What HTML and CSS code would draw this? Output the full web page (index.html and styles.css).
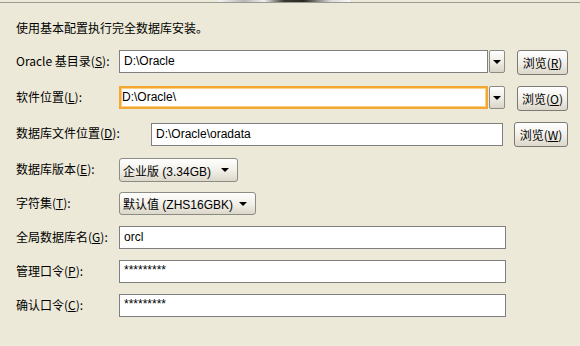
FILE: index.html
```html
<!DOCTYPE html>
<html lang="zh-CN">
<head>
    <meta charset="UTF-8">
    <title>Oracle 安装</title>
    <link rel="stylesheet" href="styles.css">
</head>
<body>

    <!-- top banner edge -->
    <div class="topbar"><div class="banner-edge"></div></div>

    <p class="intro">使用基本配置执行完全数据库安装。</p>

    <div class="form">
        <div class="row tall">
            <label class="label">Oracle 基目录(<u>S</u>):</label>
            <div class="combo">
                <div class="field">D:\Oracle</div>
                <div class="drop"><span class="tri"></span></div>
            </div>
            <button class="browse">浏览(<u>R</u>)</button>
        </div>

        <div class="row tall">
            <label class="label">软件位置(<u>L</u>):</label>
            <div class="combo">
                <div class="field focus">D:\Oracle\</div>
                <div class="drop"><span class="tri"></span></div>
            </div>
            <button class="browse">浏览(<u>O</u>)</button>
        </div>

        <div class="row tall">
            <label class="label wide">数据库文件位置(<u>D</u>):</label>
            <div class="field data">D:\Oracle\oradata</div>
            <button class="browse narrow">浏览(<u>W</u>)</button>
        </div>

        <div class="row">
            <label class="label">数据库版本(<u>E</u>):</label>
            <div class="select edition">企业版 (3.34GB)<span class="tri"></span></div>
        </div>

        <div class="row">
            <label class="label">字符集(<u>T</u>):</label>
            <div class="select charset">默认值 (ZHS16GBK)<span class="tri"></span></div>
        </div>

        <div class="row">
            <label class="label">全局数据库名(<u>G</u>):</label>
            <div class="field plain">orcl</div>
        </div>

        <div class="row">
            <label class="label">管理口令(<u>P</u>):</label>
            <div class="field plain pw">*********</div>
        </div>

        <div class="row">
            <label class="label">确认口令(<u>C</u>):</label>
            <div class="field plain pw">*********</div>
        </div>
    </div>

</body>
</html>
```

FILE: styles.css
```css
body {
    margin: 0;
    background-color: #ece9d8;
    font-family: "Noto Sans CJK SC", "Liberation Sans", sans-serif;
    font-size: 12px;
    color: #000;
    width: 580px;
    height: 346px;
    overflow: hidden;
}

.topbar {
    height: 2px;
    border-bottom: 1px solid #9a9a92;
    display: flex;
    justify-content: center;
}

.banner-edge {
    width: 132px;
    height: 2px;
    margin-left: -12px;
    background: linear-gradient(to right, #f4f4f4, #b8b8b8 20%, #f0f0f0 35%, #3a3a30 50%, #2a2a22 65%, #d8d8d8 85%, #fafafa);
}

.intro {
    margin: 0;
    padding: 17px 0 0 16px;
    line-height: 16px;
    height: 16px;
}

.form {
    margin-top: 14px;
    padding-left: 16px;
}

.row {
    display: flex;
    align-items: flex-start;
    height: 24px;
    margin-bottom: 10px;
}

.row.tall {
    height: 25px;
    margin-bottom: 11px;
}

.label {
    width: 103px;
    flex: none;
    line-height: 22px;
    white-space: nowrap;
}

.label.wide {
    width: 135px;
}

u {
    text-decoration: underline;
    text-underline-offset: 1px;
}

.combo {
    display: flex;
    width: 386px;
    height: 23px;
}

.field {
    box-sizing: border-box;
    height: 23px;
    border: 1px solid #7f7f7f;
    background: #fff;
    padding-left: 4px;
    line-height: 21px;
    font-family: "Liberation Sans", sans-serif;
    font-size: 12px;
}

.combo .field {
    flex: 1;
}

.field.focus {
    border: 2px solid #f4a833;
    box-shadow: inset 0 0 0 1px #fcd083;
    padding-left: 1px;
    line-height: 19px;
}

.field.data {
    width: 352px;
    margin-top: 1px;
}

.field.plain {
    width: 387px;
}

.field.pw {
    font-size: 12px;
    line-height: 19px;
}

.drop {
    box-sizing: border-box;
    width: 16px;
    height: 23px;
    margin-left: 1px;
    border: 1px solid #8c8c84;
    border-radius: 2px;
    background: linear-gradient(#ffffff, #ece9e0 60%, #d8d4c8);
    display: flex;
    align-items: center;
    justify-content: center;
}

.tri {
    width: 0;
    height: 0;
    border-left: 4px solid transparent;
    border-right: 4px solid transparent;
    border-top: 4px solid #000;
}

.browse {
    box-sizing: border-box;
    width: 51px;
    height: 25px;
    margin-left: 12px;
    padding: 0;
    border: 1px solid #7b7b73;
    border-radius: 3px;
    background: linear-gradient(#ffffff, #f2f0ea 50%, #dcd7ca);
    font-family: "Noto Sans CJK SC", sans-serif;
    font-size: 12px;
    color: #000;
    line-height: 22px;
}

.browse.narrow {
    width: 54px;
    margin-left: 11px;
}

.select {
    box-sizing: border-box;
    height: 24px;
    display: flex;
    align-items: center;
    justify-content: space-between;
    padding: 0 8px 0 3px;
    border: 1px solid #8c8c84;
    border-radius: 3px;
    background: linear-gradient(#ffffff, #f0eee6 55%, #dcd7ca);
    font-family: "Liberation Sans", "Noto Sans CJK SC", sans-serif;
    white-space: nowrap;
}

.select.edition {
    width: 119px;
}

.select.charset {
    width: 137px;
    height: 23px;
}
```
